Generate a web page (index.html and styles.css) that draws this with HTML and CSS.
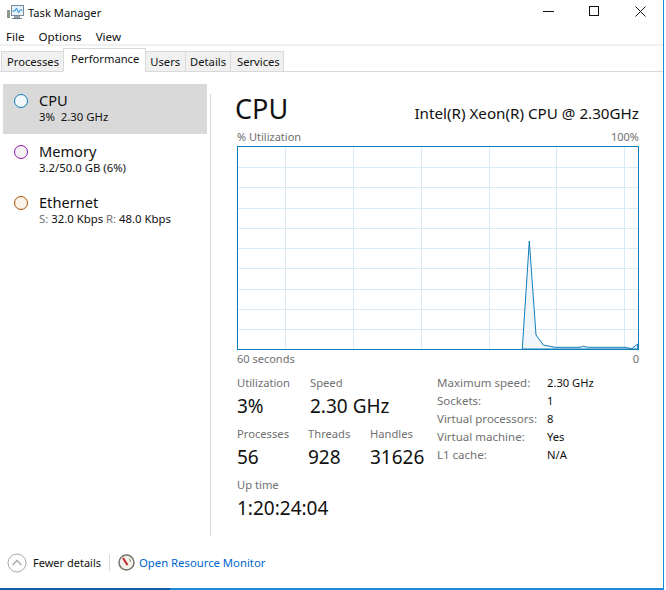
FILE: index.html
```html
<!DOCTYPE html>
<html lang="en">
<head>
<meta charset="utf-8">
<title>Task Manager</title>
<link rel="stylesheet" href="styles.css">
</head>
<body>
<div class="window">
  <header class="titlebar">
    <div class="title">
      <svg class="app-icon" width="18" height="16" viewBox="0 0 18 16">
        <rect x="5.5" y="1.5" width="12" height="10" fill="#e6f2fb" stroke="#7d8a96"/>
        <path d="M6.5 7 L9 7 L10.5 4 L12.5 9 L14 6 L16.5 6" fill="none" stroke="#2f8fd8"/>
        <rect x="1" y="6" width="3" height="8" fill="#8a9a8c"/>
        <path d="M8 12h6v2H8z" fill="#98a2aa"/>
        <path d="M6 14h10v1H6z" fill="#6b7780"/>
      </svg>
      <span>Task Manager</span>
    </div>
    <div class="controls">
      <svg width="11" height="11" viewBox="0 0 11 11"><path d="M0 5.5H11" stroke="#111"/></svg>
      <svg width="11" height="11" viewBox="0 0 11 11"><rect x=".5" y=".5" width="9" height="9" fill="none" stroke="#111"/></svg>
      <svg width="11" height="11" viewBox="0 0 11 11"><path d="M.5 .5L10.5 10.5M10.5 .5L.5 10.5" stroke="#111"/></svg>
    </div>
  </header>
  <nav class="menu"><span>File</span><span>Options</span><span>View</span></nav>
  <div class="tabs">
    <span class="tab">Processes</span>
    <span class="tab active">Performance</span>
    <span class="tab tab-users">Users</span>
    <span class="tab">Details</span>
    <span class="tab tab-services">Services</span>
  </div>
  <main class="content">
    <aside class="sidebar">
      <div class="res selected">
        <i class="dot dot-cpu"></i>
        <div><div class="res-name">CPU</div><div class="res-sub">3%&nbsp; 2.30 GHz</div></div>
      </div>
      <div class="res">
        <i class="dot dot-mem"></i>
        <div><div class="res-name">Memory</div><div class="res-sub">3.2/50.0 GB (6%)</div></div>
      </div>
      <div class="res">
        <i class="dot dot-eth"></i>
        <div><div class="res-name">Ethernet</div><div class="res-sub"><span class="muted">S:</span> 32.0 Kbps <span class="muted">R:</span> 48.0 Kbps</div></div>
      </div>
    </aside>
    <section class="panel">
      <div class="head">
        <h1>CPU</h1>
        <span class="model">Intel(R) Xeon(R) CPU @ 2.30GHz</span>
      </div>
      <div class="axis axis-top"><span>% Utilization</span><span>100%</span></div>
      <svg class="graph" width="402" height="204" viewBox="0 0 402 204">
        <path d="M48.5 0V204M116.5 0V204M184.5 0V204M252.5 0V204M319.5 0V204M387.5 0V204M0 21.5H402M0 41.5H402M0 62.5H402M0 82.5H402M0 102.5H402M0 122.5H402M0 143.5H402M0 163.5H402M0 183.5H402" stroke="#d9eaf4" fill="none"/>
        <path d="M285.3 203 L292.3 95 L299 189 L306.3 199 L318 201.3 L343 201.3 L346.3 200.3 L351.3 201.3 L388 201.3 L394.7 202.7 L400.7 198 V203 Z" fill="#f1f6fa" stroke="#117dbb"/>
        <rect x=".5" y=".5" width="401" height="203" fill="none" stroke="#117dbb"/>
      </svg>
      <div class="axis axis-bottom"><span>60 seconds</span><span>0</span></div>
      <div class="details">
        <div class="stats">
          <div class="stat-row">
            <div class="stat w-util"><div class="label">Utilization</div><div class="value">3%</div></div>
            <div class="stat"><div class="label">Speed</div><div class="value">2.30 GHz</div></div>
          </div>
          <div class="stat-row">
            <div class="stat w-proc"><div class="label">Processes</div><div class="value">56</div></div>
            <div class="stat w-thr"><div class="label">Threads</div><div class="value">928</div></div>
            <div class="stat"><div class="label">Handles</div><div class="value">31626</div></div>
          </div>
          <div class="stat-row">
            <div class="stat"><div class="label">Up time</div><div class="value">1:20:24:04</div></div>
          </div>
        </div>
        <dl class="specs">
          <dt>Maximum speed:</dt><dd>2.30 GHz</dd>
          <dt>Sockets:</dt><dd>1</dd>
          <dt>Virtual processors:</dt><dd>8</dd>
          <dt>Virtual machine:</dt><dd>Yes</dd>
          <dt>L1 cache:</dt><dd>N/A</dd>
        </dl>
      </div>
    </section>
  </main>
  <footer class="footer">
    <svg class="chev" width="20" height="20" viewBox="0 0 20 20"><circle cx="10" cy="10" r="9" fill="#fff" stroke="#a8a8a8"/><path d="M5.5 12L10 7.5L14.5 12" fill="none" stroke="#a8a8a8" stroke-width="1.4"/></svg>
    <span class="fewer">Fewer details</span>
    <span class="sep"></span>
    <svg class="monitor" width="17" height="17" viewBox="0 0 17 17"><circle cx="8.5" cy="8.5" r="7.5" fill="#f4f1ea" stroke="#77736c" stroke-width="1.5"/><path d="M5 4L9.5 11" stroke="#c8242c" stroke-width="2"/><path d="M11.5 4.5L12.5 8" stroke="#8a8a8a"/></svg>
    <a class="link" href="#">Open Resource Monitor</a>
  </footer>
  <div class="edge"></div>
</div>
</body>
</html>
```

FILE: styles.css
```css
* { box-sizing: border-box; margin: 0; padding: 0; }
html, body { height: 100%; background: #fff; overflow: hidden; }
body { font-family: "Noto Sans", "Open Sans", sans-serif; font-size: 11.2px; color: #111; }
.window { position: relative; width: 666px; height: 590px; display: flex; flex-direction: column; border-right: 2px solid #fff; }
.window::after { content: ""; position: absolute; top: 0; bottom: 0; right: 0; width: 1px; background: #1c8ad8; }
.titlebar { height: 27px; display: flex; justify-content: space-between; align-items: center; padding: 0 18px 3px 6px; }
.title { display: flex; align-items: center; gap: 4px; font-size: 11.2px; }
.app-icon { display: block; }
.controls { display: flex; gap: 35px; margin-top: -2px; }
.controls svg { display: block; }
.menu { height: 19px; display: flex; gap: 14px; padding: 2px 0 0 6px; align-items: center; border-bottom: 2px solid #f0f0f0; font-size: 11.6px; }
.tabs { height: 26px; display: flex; align-items: flex-end; padding-left: 1px; border-bottom: 1px solid #d9d9d9; }
.tab { height: 21px; margin-bottom: -1px; padding: 0 4px; display: flex; align-items: center; background: #f0f0f0; border: 1px solid #d9d9d9; border-left-width: 0; }
.tab:first-child { border-left-width: 1px; padding: 0 4px 0 5px; }
.tab.active { height: 24px; background: #fff; border-left-width: 1px; border-bottom-color: #fff; padding: 0 6px 4px 7px; margin-left: -1px; }
.tab-users { padding: 0 5px 0 4px; }
.tab-services { padding: 0 3px 0 6px; }
.content { flex: 1; display: flex; min-height: 0; }
.sidebar { width: 211px; margin-top: 12px; padding-left: 3px; }
.res { width: 204px; height: 51px; display: flex; gap: 11px; padding: 6px 0 0 11px; }
.res.selected { background: #d9d9d9; height: 50px; margin-bottom: 1px; }
.res-name { font-size: 14.6px; line-height: 20px; }
.res-sub { font-size: 11.35px; line-height: 14px; }
.muted { color: #707070; }
.dot { width: 14px; height: 14px; border-radius: 50%; margin-top: 4px; flex: none; border: 1.5px solid; }
.dot-cpu { border-color: #117dbb; background: #f1f6fa; }
.dot-mem { border-color: #8b12ae; background: #f4f2f4; }
.dot-eth { border-color: #a74f01; background: #fcf3eb; }
.panel { flex: 1; margin: 22px 0 0 0; padding: 0 25px 0 26px; border-left: 1px solid #d9d9d9; }
.head { display: flex; justify-content: space-between; align-items: flex-end; height: 38px; margin-top: -4px; }
h1 { font-size: 27px; font-weight: 400; line-height: 38px; margin-left: -2px; }
.model { font-size: 15.2px; line-height: 19px; padding-bottom: 5px; }
.axis { display: flex; justify-content: space-between; font-size: 11px; color: #707070; line-height: 14px; }
.axis-top { margin-top: 2px; margin-bottom: 2px; }
.axis-bottom { margin-top: 2px; }
.graph { display: block; }
.details { display: flex; margin-top: 9px; height: 160px; }
.stats { width: 200px; }
.stat-row { display: flex; height: 51px; }
.w-util { width: 73px; }
.w-proc { width: 71px; }
.w-thr { width: 62px; }
.label { font-size: 11.2px; line-height: 16px; margin-bottom: 1px; color: #707070; }
.value { font-size: 19px; line-height: 28px; white-space: nowrap; }
.specs { display: grid; grid-template-columns: 110px 1fr; grid-auto-rows: 18px; font-size: 11.5px; line-height: 18px; margin-top: -1px; }
.specs dt { color: #707070; }
.specs dd { font-size: 11.2px; }
.footer { height: 49px; flex: none; display: flex; align-items: center; padding: 0 0 2px 7px; margin-top: 3px; }
.fewer { margin-left: 6px; font-size: 11px; }
.sep { width: 1px; height: 17px; background: #d9d9d9; margin: 0 8px; }
.link { margin-left: 4px; color: #0066cc; text-decoration: none; font-size: 11.3px; }
.edge { height: 2px; flex: none; background: linear-gradient(to right, #0f5fa5 170px, #1c8ad8 170px); }
```
